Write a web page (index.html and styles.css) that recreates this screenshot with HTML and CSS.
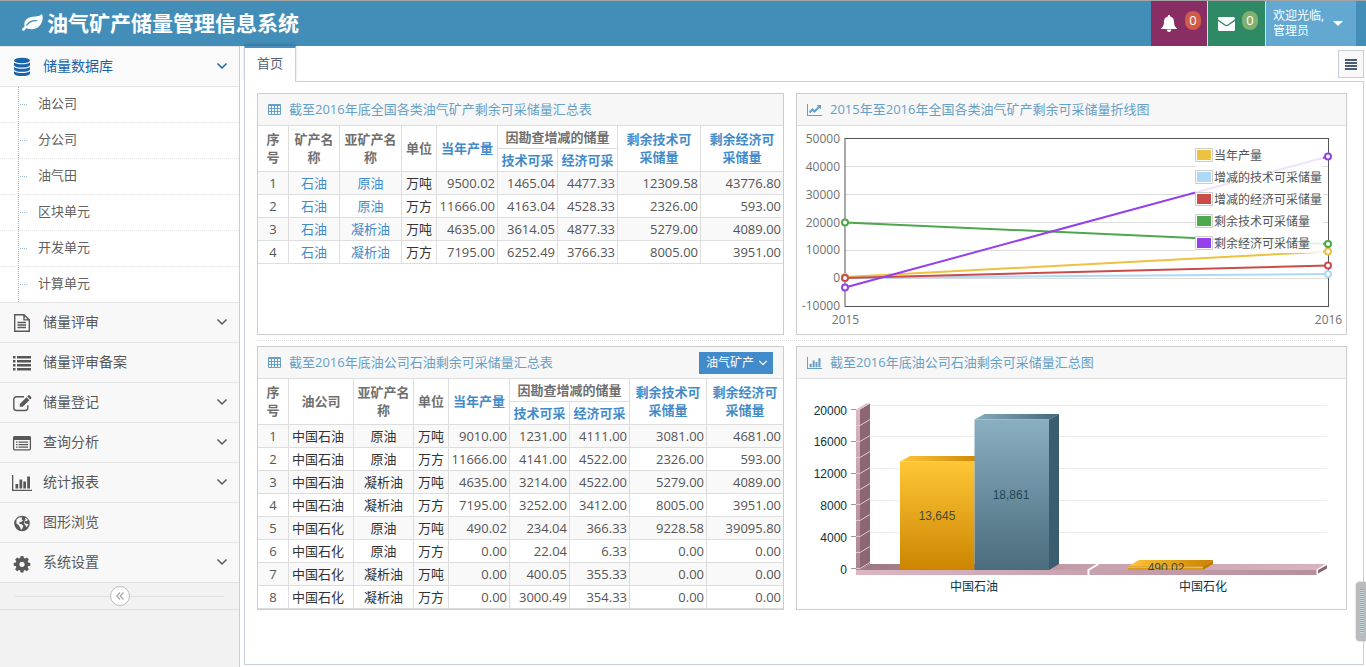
FILE: index.html
```html
<!DOCTYPE html>
<html lang="zh-CN">
<head>
<meta charset="utf-8">
<title>油气矿产储量管理信息系统</title>
<meta name="viewport" content="width=device-width, initial-scale=1">
<link rel="stylesheet" href="styles.css">
</head>
<body>
<svg class="sprite" aria-hidden="true">
  <symbol id="i-down" viewBox="0 0 12 12"><path d="M1.500 3.500L6 8L10.500 3.500" fill="none" stroke="currentColor" stroke-width="1.500"/></symbol>
  <symbol id="i-table" viewBox="0 0 13 11"><path d="M1 0h11a1 1 0 0 1 1 1v9a1 1 0 0 1-1 1H1a1 1 0 0 1-1-1V1a1 1 0 0 1 1-1zM1 2v2h2V2zM4 2v2h2V2zM7 2v2h2V2zM10 2v2h2V2zM1 5v2h2V5zM4 5v2h2V5zM7 5v2h2V5zM10 5v2h2V5zM1 8v2h2V8zM4 8v2h2V8zM7 8v2h2V8zM10 8v2h2V8z" fill="currentColor" fill-rule="evenodd"/></symbol>
  <symbol id="i-bars" viewBox="0 0 20 16"><path d="M0 0h1.300v14.700H20V16H0zM3.500 9h2.700v4.500H3.500zM7.500 4.500h2.700v9H7.500zM11.300 6.500H14v7h-2.700zM15.200 1.500H18v12h-2.800z" fill="currentColor"/></symbol>
</svg>

<header class="topbar">
  <a class="brand" href="#">
    <svg class="brand-icon" viewBox="0 0 21 18"><path d="M20.400 1.200C20 .200 19.500 0 19 .600c-1.200 1.500-2.900 1.900-5.500 2C9.500 2.700 6.500 3.400 4.300 5.600 2.500 7.400 2.100 9.200 2.500 11.300c.200.900-.200 1.500-1 2.300C.700 14.300 0 14.800 0 15.400c.1.700.8 1.500 1.600 1.500.800 0 1.200-1.200 2-2 .6-.7 1-.6 1.700-.3 2.700 1.100 6.300 1.100 9.300-.5C19 11.800 21.600 6 20.400 1.200zM14.500 7.300C10.500 7 8 8.300 5.600 11.300c-.8.900-1.900.1-1.200-.9C7 6.800 10.300 5.700 14.600 6c.9.100.8 1.400-.1 1.300z" fill="#fff" fill-rule="evenodd"/></svg>
    <span>油气矿产储量管理信息系统</span>
  </a>
  <nav class="tools">
    <button class="tool purple" type="button" aria-label="通知">
      <svg class="bell" viewBox="0 0 16 17"><path d="M8 0c.8 0 1.300.6 1.200 1.400C11.700 2 13 4 13 6.500c0 3.800 1 5.200 3 7v.500H0v-.500c2-1.800 3-3.200 3-7C3 4 4.300 2 6.800 1.400 6.700.600 7.200 0 8 0zM5.700 14.500h4.600C10.300 16 9.300 17 8 17s-2.300-1-2.300-2.500z" fill="#fff"/></svg>
      <span class="badge red">0</span>
    </button>
    <button class="tool green" type="button" aria-label="消息">
      <svg class="mail" viewBox="0 0 17 14"><path d="M1.500 0h14C16.400 0 17 .600 17 1.500c0 .7-.5 1.200-1 1.600L9.800 7.500c-.9.600-1.700.6-2.600 0L1 3.100C.400 2.700 0 2.200 0 1.500 0 .600.600 0 1.500 0zM0 4l6.500 4.600c1.300.9 2.700.9 4 0L17 4v8.500c0 .900-.6 1.500-1.500 1.500h-14C.600 14 0 13.400 0 12.500z" fill="#fff"/></svg>
      <span class="badge lime">0</span>
    </button>
    <button class="tool user" type="button">
      <span class="who">欢迎光临,<br>管理员</span>
      <svg class="caret" viewBox="0 0 10 5"><path d="M0 0h10L5 5z" fill="#fff"/></svg>
    </button>
  </nav>
</header>

<div class="shell">
  <aside class="sidebar">
    <ul class="menu">
      <li class="item">
        <a class="link open" href="#">
          <svg class="ico" viewBox="0 0 20 20"><g fill="currentColor"><ellipse cx="10" cy="3.500" rx="8" ry="2.800"/><path d="M2 5.500c2 2.400 14 2.400 16 0V8c0 3.400-16 3.400-16 0zM2 10c2 2.400 14 2.400 16 0v2.200c0 3.400-16 3.400-16 0zM2 14.200c2 2.400 14 2.400 16 0v2.300c0 3.400-16 3.400-16 0z"/></g></svg>
          <span>储量数据库</span><svg class="arrow"><use href="#i-down"/></svg>
        </a>
        <ul class="submenu">
          <li><a href="#">油公司</a></li>
          <li><a href="#">分公司</a></li>
          <li><a href="#">油气田</a></li>
          <li><a href="#">区块单元</a></li>
          <li><a href="#">开发单元</a></li>
          <li><a href="#">计算单元</a></li>
        </ul>
      </li>
      <li class="item"><a class="link" href="#">
        <svg class="ico" viewBox="0 0 20 20"><path d="M2.700 1.700H12l5.300 5.200v11.400H2.700zM12 1.700v5.200h5.300M5.500 9.500h8.500M5.500 12h8.500M5.500 14.500h8.500" fill="none" stroke="currentColor" stroke-width="1.400"/></svg>
        <span>储量评审</span><svg class="arrow"><use href="#i-down"/></svg></a></li>
      <li class="item"><a class="link" href="#">
        <svg class="ico" viewBox="0 0 20 20"><path d="M1 3h2.500v2.500H1zM5 3h14v2.500H5zM1 7h2.500v2.500H1zM5 7h14v2.500H5zM1 11h2.500v2.500H1zM5 11h14v2.500H5zM1 15h2.500v2.500H1zM5 15h14v2.500H5z" fill="currentColor"/></svg>
        <span>储量评审备案</span></a></li>
      <li class="item"><a class="link" href="#">
        <svg class="ico" viewBox="0 0 20 20"><path d="M12 3.700H4.500A2.700 2.700 0 0 0 1.800 6.400v8.400a2.700 2.700 0 0 0 2.700 2.700h8.600a2.700 2.700 0 0 0 2.700-2.700v-2.600" fill="none" stroke="currentColor" stroke-width="1.400"/><path d="M14.500 4.300l2.900 2.900-6.700 6.600H7.800v-2.900zM15.200 3.600l1-1c.5-.5 1-.5 1.500 0l1.400 1.400c.500.5.500 1 0 1.500l-1 1z" fill="currentColor"/></svg>
        <span>储量登记</span><svg class="arrow"><use href="#i-down"/></svg></a></li>
      <li class="item"><a class="link" href="#">
        <svg class="ico" viewBox="0 0 20 20"><rect x="1.600" y="3.600" width="16.800" height="13.300" rx="1.300" fill="none" stroke="currentColor" stroke-width="1.300"/><path d="M1.500 3.500h17V7h-17zM4 8.500h1.500v1.300H4zM6.500 8.500H16v1.300H6.500zM4 11h1.500v1.300H4zM6.500 11H16v1.300H6.500zM4 13.500h1.500v1.300H4zM6.500 13.500H16v1.300H6.500z" fill="currentColor"/></svg>
        <span>查询分析</span><svg class="arrow"><use href="#i-down"/></svg></a></li>
      <li class="item"><a class="link" href="#">
        <svg class="ico"><use href="#i-bars"/></svg>
        <span>统计报表</span><svg class="arrow"><use href="#i-down"/></svg></a></li>
      <li class="item"><a class="link" href="#">
        <svg class="ico" viewBox="0 0 20 20"><circle cx="10" cy="10.500" r="7.800" fill="currentColor"/><path d="M4.500 6.500l3-2.300 2.800.3-.8 1.700 1.500 1-1.700 1.700-2 .4.300 1.600 2.200.3 1.600 1.800-1 2.500-1.300 1.600-1-2.700-1.300-2.200-2.400-1.800zM13 4.500l2.700 2-.5 1.800-2-.5-1 1.500 1.600 1.400 2.700.3-1.700 3.200-1.300-1.700-1.600-2.200.3-2 1.300-1.600z" fill="#f8f8f8"/></svg>
        <span>图形浏览</span></a></li>
      <li class="item"><a class="link" href="#">
        <svg class="ico" viewBox="0 0 20 20"><path d="M8.600 3h2.800l.4 2.100 1.300.5 1.800-1.200 2 2-1.200 1.800.5 1.300 2.100.4v2.800l-2.100.4-.5 1.300 1.200 1.800-2 2-1.800-1.200-1.300.5-.4 2.100H8.600l-.4-2.100-1.300-.5-1.800 1.200-2-2 1.200-1.800-.5-1.300-2.100-.4V9.900l2.100-.4.500-1.300-1.200-1.800 2-2 1.800 1.200 1.300-.5zM10 8.700a2.600 2.600 0 1 0 0 5.200 2.600 2.600 0 0 0 0-5.200z" fill="currentColor" fill-rule="evenodd"/></svg>
        <span>系统设置</span><svg class="arrow"><use href="#i-down"/></svg></a></li>
    </ul>
    <div class="collapse">
      <button type="button" aria-label="收起菜单"><svg viewBox="0 0 10 10"><path d="M5 1.500L1.800 5 5 8.500M8.500 1.500L5.300 5 8.500 8.500" fill="none" stroke="currentColor" stroke-width="1.300"/></svg></button>
    </div>
  </aside>

  <main class="main">
    <div class="tabbar">
      <a class="tab" href="#">首页</a>
      <button class="tabmenu" type="button" aria-label="标签菜单"><svg viewBox="0 0 12 11"><path d="M0 0h12v2H0zM0 3h12v2H0zM0 6h12v2H0zM0 9h12v2H0z" fill="#4c5a72"/></svg></button>
    </div>
    <div class="content">
      <div class="row">
        <section class="card">
          <h2 class="card-head"><svg class="head-ico table-ico"><use href="#i-table"/></svg><span>截至2016年底全国各类油气矿产剩余可采储量汇总表</span></h2>
          <table class="grid">
            <colgroup><col style="width:31px"><col style="width:51px"><col style="width:62px"><col style="width:35px"><col style="width:61px"><col style="width:60px"><col style="width:60px"><col style="width:83px"><col style="width:82px"></colgroup>
            <thead>
              <tr><th rowspan="2">序号</th><th rowspan="2">矿产名称</th><th rowspan="2">亚矿产名称</th><th rowspan="2">单位</th><th class="hot" rowspan="2">当年产量</th><th colspan="2">因勘查增减的储量</th><th class="hot" rowspan="2">剩余技术可采储量</th><th class="hot" rowspan="2">剩余经济可采储量</th></tr>
              <tr><th class="hot">技术可采</th><th class="hot">经济可采</th></tr>
            </thead>
            <tbody>
              <tr><td>1</td><td><a href="#">石油</a></td><td><a href="#">原油</a></td><td class="dark">万吨</td><td class="num">9500.02</td><td class="num">1465.04</td><td class="num">4477.33</td><td class="num">12309.58</td><td class="num">43776.80</td></tr>
              <tr><td>2</td><td><a href="#">石油</a></td><td><a href="#">原油</a></td><td class="dark">万方</td><td class="num">11666.00</td><td class="num">4163.04</td><td class="num">4528.33</td><td class="num">2326.00</td><td class="num">593.00</td></tr>
              <tr><td>3</td><td><a href="#">石油</a></td><td><a href="#">凝析油</a></td><td class="dark">万吨</td><td class="num">4635.00</td><td class="num">3614.05</td><td class="num">4877.33</td><td class="num">5279.00</td><td class="num">4089.00</td></tr>
              <tr><td>4</td><td><a href="#">石油</a></td><td><a href="#">凝析油</a></td><td class="dark">万方</td><td class="num">7195.00</td><td class="num">6252.49</td><td class="num">3766.33</td><td class="num">8005.00</td><td class="num">3951.00</td></tr>
            </tbody>
          </table>
        </section>
        <section class="card">
          <h2 class="card-head"><svg class="head-ico" viewBox="0 0 15 12"><path d="M0 0h1v11h14v1H0z" fill="currentColor"/><path d="M2.500 8.500L5.500 5.500 7.500 7.500 12 3" fill="none" stroke="currentColor" stroke-width="2"/><path d="M9.500 1H14v4.500z" fill="currentColor"/></svg><span>2015年至2016年全国各类油气矿产剩余可采储量折线图</span></h2>
          <svg class="chart line-chart" viewBox="797 126 549 208" role="img" aria-label="折线图">
            <g stroke="#dcdcdc"><path d="M845 166.500h483M845 194.500h483M845 222.500h483M845 250.500h483M845 278.500h483"/></g>
            <rect x="845" y="138.500" width="483.500" height="168" fill="none" stroke="#545454"/>
            <g class="axis" text-anchor="end">
              <text x="840" y="143">50000</text><text x="840" y="171">40000</text><text x="840" y="199">30000</text><text x="840" y="227">20000</text><text x="840" y="254">10000</text><text x="840" y="282">0</text><text x="840" y="310">-10000</text>
            </g>
            <g class="axis" text-anchor="middle"><text x="845.500" y="324">2015</text><text x="1328.500" y="324">2016</text></g>
            <g fill="none" stroke-width="2">
              <path d="M845 277L1328 251.500" stroke="#edc240"/><path d="M845 278L1328 274" stroke="#afd8f8"/><path d="M845 278L1328 265.500" stroke="#cb4b4b"/><path d="M845 222.500L1328 244" stroke="#4da74d"/><path d="M845 287.500L1328 156.500" stroke="#9440ed"/>
            </g>
            <g fill="#fff" stroke-width="2">
              <g stroke="#edc240"><circle cx="845" cy="277" r="3"/><circle cx="1328" cy="251.500" r="3"/></g>
              <g stroke="#afd8f8"><circle cx="845" cy="278" r="3"/><circle cx="1328" cy="274" r="3"/></g>
              <g stroke="#cb4b4b"><circle cx="845" cy="278" r="3"/><circle cx="1328" cy="265.500" r="3"/></g>
              <g stroke="#4da74d"><circle cx="845" cy="222.500" r="3"/><circle cx="1328" cy="244" r="3"/></g>
              <g stroke="#9440ed"><circle cx="845" cy="287.500" r="3"/><circle cx="1328" cy="156.500" r="3"/></g>
            </g>
            <rect x="1195" y="144" width="128" height="109" fill="#fff" opacity=".85"/>
            <g fill="#fff" stroke="#ccc"><path d="M1195.500 148.500h17v13h-17zM1195.500 170.500h17v13h-17zM1195.500 192.500h17v13h-17zM1195.500 214.500h17v13h-17zM1195.500 236.500h17v13h-17z"/></g>
            <rect x="1197" y="150" width="14" height="10" fill="#edc240"/><rect x="1197" y="172" width="14" height="10" fill="#afd8f8"/><rect x="1197" y="194" width="14" height="10" fill="#cb4b4b"/><rect x="1197" y="216" width="14" height="10" fill="#4da74d"/><rect x="1197" y="238" width="14" height="10" fill="#9440ed"/>
            <g class="legend"><text x="1214" y="160">当年产量</text><text x="1214" y="182">增减的技术可采储量</text><text x="1214" y="204">增减的经济可采储量</text><text x="1214" y="226">剩余技术可采储量</text><text x="1214" y="248">剩余经济可采储量</text></g>
          </svg>
        </section>
      </div>
      <hr class="rule">
      <div class="row">
        <section class="card">
          <h2 class="card-head"><svg class="head-ico table-ico"><use href="#i-table"/></svg><span>截至2016年底油公司石油剩余可采储量汇总表</span>
            <button class="pick" type="button">油气矿产<svg><use href="#i-down"/></svg></button></h2>
          <table class="grid">
            <colgroup><col style="width:31px"><col style="width:65px"><col style="width:60px"><col style="width:35px"><col style="width:61px"><col style="width:60px"><col style="width:60px"><col style="width:77px"><col style="width:76px"></colgroup>
            <thead>
              <tr><th rowspan="2">序号</th><th rowspan="2">油公司</th><th rowspan="2">亚矿产名称</th><th rowspan="2">单位</th><th class="hot" rowspan="2">当年产量</th><th colspan="2">因勘查增减的储量</th><th class="hot" rowspan="2">剩余技术可采储量</th><th class="hot" rowspan="2">剩余经济可采储量</th></tr>
              <tr><th class="hot">技术可采</th><th class="hot">经济可采</th></tr>
            </thead>
            <tbody>
              <tr><td>1</td><td class="dark name">中国石油</td><td class="dark">原油</td><td class="dark">万吨</td><td class="num">9010.00</td><td class="num">1231.00</td><td class="num">4111.00</td><td class="num">3081.00</td><td class="num">4681.00</td></tr>
              <tr><td>2</td><td class="dark name">中国石油</td><td class="dark">原油</td><td class="dark">万方</td><td class="num">11666.00</td><td class="num">4141.00</td><td class="num">4522.00</td><td class="num">2326.00</td><td class="num">593.00</td></tr>
              <tr><td>3</td><td class="dark name">中国石油</td><td class="dark">凝析油</td><td class="dark">万吨</td><td class="num">4635.00</td><td class="num">3214.00</td><td class="num">4522.00</td><td class="num">5279.00</td><td class="num">4089.00</td></tr>
              <tr><td>4</td><td class="dark name">中国石油</td><td class="dark">凝析油</td><td class="dark">万方</td><td class="num">7195.00</td><td class="num">3252.00</td><td class="num">3412.00</td><td class="num">8005.00</td><td class="num">3951.00</td></tr>
              <tr><td>5</td><td class="dark name">中国石化</td><td class="dark">原油</td><td class="dark">万吨</td><td class="num">490.02</td><td class="num">234.04</td><td class="num">366.33</td><td class="num">9228.58</td><td class="num">39095.80</td></tr>
              <tr><td>6</td><td class="dark name">中国石化</td><td class="dark">原油</td><td class="dark">万方</td><td class="num">0.00</td><td class="num">22.04</td><td class="num">6.33</td><td class="num">0.00</td><td class="num">0.00</td></tr>
              <tr><td>7</td><td class="dark name">中国石化</td><td class="dark">凝析油</td><td class="dark">万吨</td><td class="num">0.00</td><td class="num">400.05</td><td class="num">355.33</td><td class="num">0.00</td><td class="num">0.00</td></tr>
              <tr><td>8</td><td class="dark name">中国石化</td><td class="dark">凝析油</td><td class="dark">万方</td><td class="num">0.00</td><td class="num">3000.49</td><td class="num">354.33</td><td class="num">0.00</td><td class="num">0.00</td></tr>
            </tbody>
          </table>
        </section>
        <section class="card">
          <h2 class="card-head"><svg class="head-ico"><use href="#i-bars"/></svg><span>截至2016年底油公司石油剩余可采储量汇总图</span></h2>
          <svg class="chart bar-chart" viewBox="797 379 549 230" role="img" aria-label="柱状图">
            <defs>
              <linearGradient id="gy" x2="0" y2="1"><stop stop-color="#ffc737"/><stop offset="1" stop-color="#cc8500"/></linearGradient>
              <linearGradient id="gyt"><stop stop-color="#ffc535"/><stop offset="1" stop-color="#c98200"/></linearGradient>
              <linearGradient id="gb" x2="0" y2="1"><stop stop-color="#8aafc1"/><stop offset="1" stop-color="#4a6c7d"/></linearGradient>
              <linearGradient id="gbt"><stop stop-color="#85abbd"/><stop offset="1" stop-color="#44687a"/></linearGradient>
              <linearGradient id="gw" x2="0" y2="1"><stop stop-color="#dfb6c4"/><stop offset="1" stop-color="#a9838f"/></linearGradient>
              <linearGradient id="gf"><stop stop-color="#9d7683"/><stop offset=".5" stop-color="#c6a0ad"/><stop offset="1" stop-color="#dab3c0"/></linearGradient>
              <linearGradient id="gff"><stop stop-color="#dcb5c3"/><stop offset="1" stop-color="#b68f9c"/></linearGradient>
              <clipPath id="cut"><path d="M1120 550h100v20h-100z"/></clipPath>
            </defs>
            <path d="M870 405.500h457M870 436.500h457M870 468.500h457M870 500.500h457M870 532.500h457" stroke="#ececec"/>
            <path d="M856 409.500h4V575h-4z" fill="url(#gw)"/>
            <path d="M860 409.500l10-6V564l-10 6z" fill="#8d6673"/>
            <path d="M856 409.500l10-6h4l-10 6z" fill="#d5c3c8"/>
            <path d="M860 570l10-6h457l-10 6z" fill="url(#gf)"/>
            <path d="M856 570h461v5H856z" fill="url(#gff)"/>
            <path d="M856 425.500h4l10-6M856 441.500h4l10-6M856 457.500h4l10-6M856 473.500h4l10-6M856 489.500h4l10-6M856 504.500h4l10-6M856 520.500h4l10-6M856 536.500h4l10-6M856 552.500h4l10-6M856 568.500h4l10-6" fill="none" stroke="#dcc8ce"/>
            <path d="M851 409.500h5M851 441.500h5M851 473.500h5M851 504.500h5M851 536.500h5M851 568.500h5" stroke="#b88a99"/>
            <path d="M1088.500 575v-5l10-6M1317.500 575v-5l9-5.500" fill="none" stroke="#fff" stroke-width="2"/>
            <path d="M1318 573.500V570l9-5v3.500z" fill="#8d6673"/>
            <path d="M900 461.500l10-5.500h75l-11 5.500z" fill="url(#gyt)"/><path d="M900 461.500h74.500V570H900z" fill="url(#gy)"/>
            <path d="M974.500 419.500l10-5.500h74.500l-10 5.500z" fill="url(#gbt)"/><path d="M1049 419.500l10-5.500v150l-10 6z" fill="#3a5d6f"/><path d="M974.500 419.500H1049V570h-74.500z" fill="url(#gb)"/>
            <path d="M1128 566.500l11-6.500h74l-10 6.500z" fill="url(#gyt)"/><path d="M1203 566.500l10-6.500v4l-10 6z" fill="#c07d00"/><path d="M1128 566.500h75v3.500h-75z" fill="#dc9a14"/><path d="M1128 567.500h75" stroke="#f5b92c"/>
            <g class="value" text-anchor="middle"><text x="937" y="520">13,645</text><text x="1011" y="499">18,861</text><text x="1166" y="572" clip-path="url(#cut)">490.02</text></g>
            <g class="scale" text-anchor="end"><text x="847" y="415">20000</text><text x="847" y="446">16000</text><text x="847" y="478">12000</text><text x="847" y="510">8000</text><text x="847" y="542">4000</text><text x="847" y="574">0</text></g>
            <g class="scale" text-anchor="middle"><text x="974" y="591">中国石油</text><text x="1203" y="591">中国石化</text></g>
          </svg>
        </section>
      </div>
    </div>
  </main>
</div>
<div class="handle"></div>
</body>
</html>
```
FILE: styles.css
```css
* { box-sizing: border-box; }
body {
  margin: 0;
  min-height: 100vh;
  display: flex;
  flex-direction: column;
  background: #fff;
  color: #555;
  font: 13px/18px "Open Sans", "Noto Sans CJK SC", sans-serif;
}
a { color: inherit; text-decoration: none; }
button { font: inherit; color: inherit; border: 0; padding: 0; cursor: pointer; }
ul { list-style: none; margin: 0; padding: 0; }
svg { flex: none; display: block; }
.sprite { position: absolute; width: 0; height: 0; }

.topbar {
  display: flex;
  justify-content: space-between;
  height: 46px;
  border-top: 1px solid #a3a3a3;
  background: #438eb9;
  color: #fff;
}
.brand { display: flex; align-items: center; gap: 4px; padding: 0 0 2px 22px; font-size: 21px; line-height: 28px; font-weight: 700; }
.brand-icon { width: 21px; height: 18px; }
.tools { display: flex; padding-right: 10px; }
.tool { display: flex; align-items: center; color: #fff; }
.tool + .tool { border-left: 1px solid #ddd; }
.purple { background: #892e65; width: 56px; padding-left: 10px; gap: 8px; }
.green { background: #2e8965; width: 58px; padding-left: 10px; gap: 7px; }
.bell { width: 16px; height: 17px; }
.mail { width: 17px; height: 14px; }
.badge { align-self: flex-start; margin-top: 10px; width: 16px; height: 19px; border-radius: 8px; line-height: 18px; text-align: center; }
.red { background: #d15b47; }
.lime { background: #82af6f; }
.user { background: #62a8d1; width: 91px; padding-left: 7px; gap: 8px; }
.who { width: 52px; padding-bottom: 2px; text-align: left; font-size: 12px; line-height: 15px; white-space: nowrap; }
.caret { width: 10px; height: 5px; }

.shell { flex: 1; display: flex; }
.sidebar { flex: none; width: 240px; border-right: 1px solid #ccc; background: #f2f2f2; }
.item { border-top: 1px solid #e5e5e5; }
.link { display: flex; align-items: center; gap: 11px; height: 39px; padding: 0 11px 0 12px; background: #f8f8f8; color: #585858; font-size: 14px; }
.link span { padding-bottom: 2px; }
.open { color: #1963aa; background: #fafafa; }
.ico { width: 20px; height: 20px; }
.arrow { width: 12px; height: 12px; margin: 0 0 2px auto; }
.submenu { position: relative; background: #fff; border-top: 1px solid #e5e5e5; }
.submenu::before { content: ""; position: absolute; left: 18px; top: 0; bottom: 0; border-left: 1px dotted #9dbdd6; }
.submenu li { position: relative; }
.submenu li + li { border-top: 1px dotted #e0e0e0; }
.submenu li::before { content: ""; position: absolute; left: 20px; top: 17px; width: 7px; border-top: 1px dotted #9dbdd6; }
.submenu a { display: block; padding: 7px 0 10px 38px; color: #616161; }
.collapse { display: flex; justify-content: center; align-items: center; height: 28px; padding: 0 15px; border: 1px solid #e0e0e0; border-width: 1px 0; }
.collapse::before, .collapse::after { content: ""; flex: 1; border-top: 1px solid #e0e0e0; }
.collapse button { display: grid; place-items: center; width: 20px; height: 20px; border: 1px solid #bbb; border-radius: 50%; background: #fff; color: #aaa; }
.collapse svg { width: 10px; height: 10px; }

.main { flex: 1; min-width: 0; display: flex; flex-direction: column; padding: 0 2px 2px 4px; }
.tabbar { display: flex; justify-content: space-between; align-items: flex-start; height: 35px; }
.tab { position: relative; height: 36px; padding: 6px 12px 10px; border: 1px solid #c5d0dc; border-width: 2px 1px 0; border-top-color: #4c8fbd; background: #fff; color: #576373; box-shadow: 0 -2px 3px rgba(0, 0, 0, .15); }
.tabmenu { display: grid; place-items: center; width: 26px; height: 28px; margin: 4px 0 0; border: 1px solid #c5d0dc; background: #f9f9f9; }
.tabmenu svg { width: 12px; height: 11px; }
.content { flex: 1; padding: 11px 16px 11px 12px; border: 1px solid #c5d0dc; }
.row { display: grid; grid-template-columns: minmax(0, 527fr) minmax(0, 551fr); gap: 12px; }
.rule { margin: 5px 12px 5px 0; border: 0; border-top: 1px dotted #dcdcdc; }
.card { border: 1px solid #ccc; }
.card-head { display: flex; align-items: center; height: 32px; margin: 0; padding: 0 10px; border-bottom: 1px solid #ddd; background: #f7f7f7; color: #669fc7; font-size: 13px; line-height: 18px; font-weight: 400; }
.card-head span { padding-bottom: 2px; }
.head-ico { width: 15px; height: 12px; margin-right: 8px; }
.table-ico { width: 13px; height: 11px; }
.pick { display: flex; align-items: center; gap: 4px; margin-left: auto; height: 22px; padding: 0 5px 0 7px; background: #428bca; color: #fff; font-size: 12px; }
.pick svg { width: 10px; height: 10px; }

.grid { width: 100%; table-layout: fixed; border-spacing: 0; }
.grid th, .grid td { height: 23px; padding: 2px 3px; border: 1px solid #ddd; border-width: 0 1px 1px 0; text-align: center; line-height: 18px; }
.grid th { color: #707070; font-weight: 700; }
.grid th[rowspan] { padding-bottom: 4px; }
.grid th.hot, .grid td a { color: #428bca; }
.grid tr > :last-child { border-right-width: 0; }
.grid thead tr + tr > :last-child { border-right-width: 1px; }
.grid tbody tr:nth-child(odd) { background: #f9f9f9; }
.grid td.num { padding-right: 2px; padding-left: 0; text-align: right; }
.grid td.dark { color: #333; }
.grid td.name { text-align: left; }

.chart { width: 100%; height: auto; }
.axis, .legend { fill: #545454; font-size: 12px; }
.axis { fill: #707070; }
.value, .scale { font-family: "Liberation Sans", "Noto Sans CJK SC", sans-serif; font-size: 12px; fill: #0b333c; }
.value { fill-opacity: .8; }

.handle {
  position: fixed;
  right: 0;
  bottom: 26px;
  width: 10px;
  height: 59px;
  padding: 7px 2px 8px 4px;
  border-radius: 4px 0 0 4px;
  background: #b9bbbd;
  box-shadow: 0 0 2px #9ab;
}
.handle::before { content: ""; display: block; height: 100%; background: repeating-linear-gradient(#a0a5a8 0 1px, #c5d6d8 1px 2px); }
```
